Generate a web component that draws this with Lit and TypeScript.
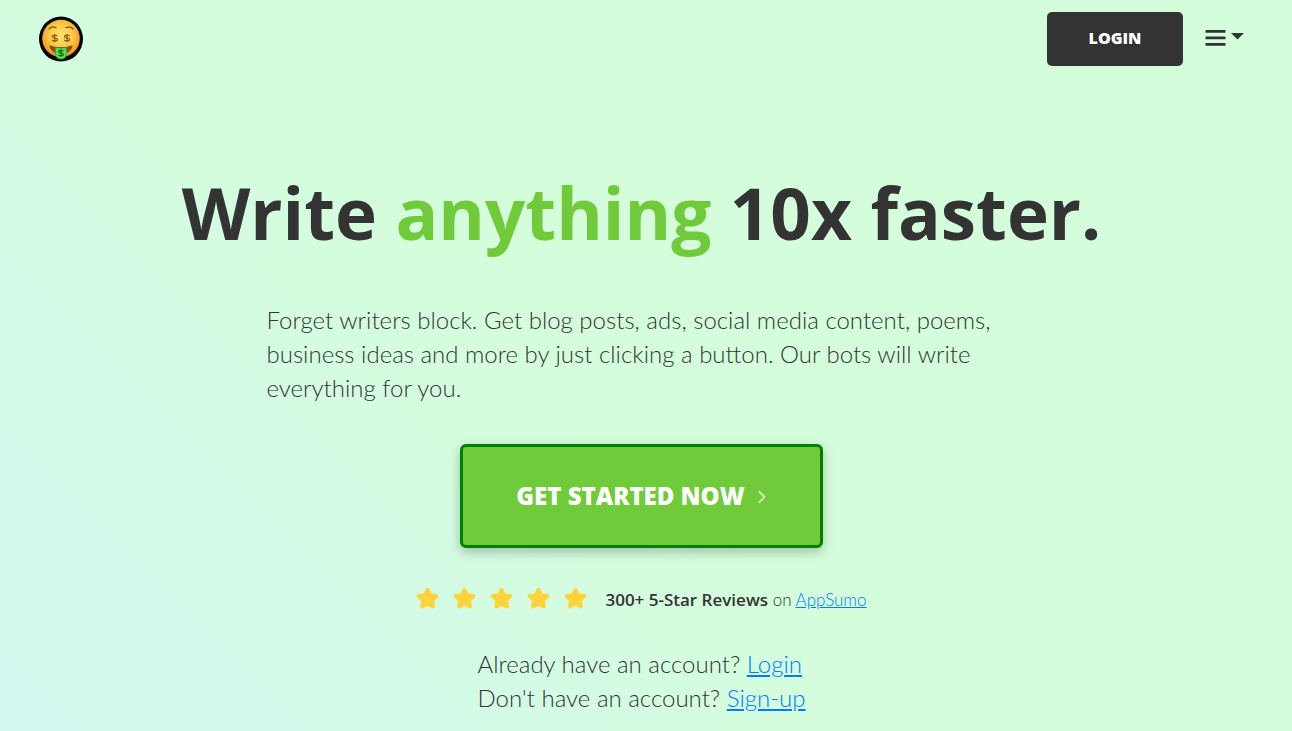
import { LitElement, html, css, svg } from "lit";
import { customElement } from "lit/decorators.js";

@customElement("money-face")
export class MoneyFace extends LitElement {
  static styles = css`
    :host { display: block; }
    svg { display: block; width: 46px; height: 46px; }
  `;

  render() {
    const dollar = svg`
      <path d="M3.200-2.200C2.700-3.300 1.500-3.800 0-3.800c-1.900 0-3.200.7-3.200 1.900C-3.200-.5-1.700-.3 0 0s3.300.6 3.300 2c0 1.200-1.400 1.900-3.300 1.900-1.600 0-2.900-.5-3.400-1.600M0-5V5"></path>
    `;
    return html`
      <svg viewBox="0 0 46 46" role="img" aria-label="Home">
        <defs>
          <radialGradient id="skin" cx="50%" cy="42%" r="58%">
            <stop offset="0" stop-color="#ffe268"></stop>
            <stop offset=".5" stop-color="#fdcd48"></stop>
            <stop offset=".85" stop-color="#f5a52a"></stop>
            <stop offset="1" stop-color="#d8801a"></stop>
          </radialGradient>
        </defs>
        <ellipse cx="23" cy="23" rx="22" ry="22.500" fill="#000"></ellipse>
        <circle cx="23" cy="22.500" r="18.800" fill="url(#skin)"></circle>
        <g fill="none" stroke="#7a4210" stroke-width="1.200" stroke-linecap="round">
          <path d="M11 13c1.500-2 4.600-2.600 7-1.400"></path>
          <path d="M35 13c-1.500-2-4.600-2.600-7-1.400"></path>
        </g>
        <g fill="none" stroke="#7d4c0c" stroke-width="1.300">
          <g transform="translate(16.800 22) scale(.8)">${dollar}</g>
          <g transform="translate(29 22) scale(.8)">${dollar}</g>
        </g>
        <path d="M11.500 29.200c6.500 2.500 16.500 2.500 23 0 .2 4.500-4.500 8.800-11.500 8.800s-11.700-4.300-11.500-8.800z" fill="#8f4a18"></path>
        <path d="M17.600 31.500c3.400.8 7.400.8 10.800 0v6.500c0 3.200-2.200 5-5.400 5s-5.400-1.800-5.400-5z" fill="#4fe04f" stroke="#1fae30" stroke-width=".7"></path>
        <g transform="translate(23 37) scale(.74)" fill="none" stroke="#0a5a18" stroke-width="1.400">${dollar}</g>
      </svg>
    `;
  }
}

@customElement("star-rating")
export class StarRating extends LitElement {
  static styles = css`
    :host { display: flex; gap: 14px; }
    svg {
      display: block;
      width: 23px;
      height: 22px;
      fill: #ffd43b;
      stroke: #ffd43b;
      stroke-width: 4;
      stroke-linejoin: round;
    }
  `;

  render() {
    return [1, 2, 3, 4, 5].map(
      () => html`
        <svg viewBox="0 0 23 22" aria-hidden="true">
          <path d="M11.500 2.800l2.600 5.400 6.200.9-4.500 4.300 1.100 6-5.400-2.800-5.400 2.800 1.100-6L2.700 9.100l6.200-.9z"></path>
        </svg>
      `,
    );
  }
}

@customElement("app-root")
export class AppRoot extends LitElement {
  static styles = css`
    :host {
      display: block;
      box-sizing: border-box;
      min-height: 100vh;
      padding-right: 9px;
      background: linear-gradient(45deg, #d2f8f0 0%, #d3fbe5 26%, #d4fedb 46%);
      color: #333;
      font-family: Lato, "Liberation Sans", sans-serif;
      font-weight: 300;
    }
    header {
      display: flex;
      align-items: center;
      justify-content: space-between;
      padding: 12px 39px 0 38px;
    }
    .actions { display: flex; align-items: center; gap: 22px; }
    button { border: 0; cursor: pointer; color: inherit; }
    .login {
      min-width: 136px;
      padding: 14px 24px 16px;
      border-radius: 5px;
      background: #333;
      color: #fff;
      font: 800 16px/24px "Open Sans", sans-serif;
    }
    .menu {
      display: flex;
      gap: 5px;
      padding: 0;
      background: none;
    }
    .bars { display: block; width: 21px; height: 18px; }
    .caret { display: block; width: 13px; height: 12px; }
    main {
      display: flex;
      flex-direction: column;
      align-items: center;
      padding: 106px 24px 16px;
    }
    h1 {
      margin: 0;
      font: 700 71px/82px "Open Sans", sans-serif;
    }
    .accent { color: #70ca3a; }
    .intro {
      max-width: 750px;
      margin: 49px 0 39px;
      font-size: 24px;
      line-height: 34px;
    }
    .cta {
      display: flex;
      align-items: center;
      gap: 12px;
      padding: 33px 53px;
      border: 3px solid #008000;
      border-radius: 6px;
      background: #6fcb39;
      box-shadow: 0 4px 12px rgba(0, 0, 0, 0.25);
      color: #fff;
      font: 800 24px/32px "Open Sans", sans-serif;
    }
    .chevron { display: block; width: 10px; height: 14px; opacity: 0.6; }
    .reviews {
      display: flex;
      align-items: flex-start;
      gap: 18px;
      margin: 39px 0 34px;
      font-size: 17px;
      line-height: 26px;
    }
    .reviews p, .accounts p { margin: 0; }
    strong { font: 600 17px/26px "Open Sans", sans-serif; }
    a { color: #007bff; text-decoration: underline; }
    .accounts { font-size: 24px; line-height: 34px; }
  `;

  render() {
    return html`
      <header>
        <money-face></money-face>
        <div class="actions">
          <button class="login" type="button">LOGIN</button>
          <button class="menu" type="button" aria-label="Menu">
            <svg class="bars" viewBox="0 0 21 18" fill="#333" aria-hidden="true">
              <rect x="0.500" y="0" width="20" height="2.700" rx=".5"></rect>
              <rect x="0.500" y="6.500" width="20" height="2.700" rx=".5"></rect>
              <rect x="0.500" y="13" width="20" height="2.700" rx=".5"></rect>
            </svg>
            <svg class="caret" viewBox="0 0 13 12" fill="#333" aria-hidden="true">
              <path d="M0 3h13L6.500 9.500z"></path>
            </svg>
          </button>
        </div>
      </header>
      <main>
        <h1>Write <span class="accent">anything</span> 10x faster.</h1>
        <p class="intro">
          Forget writers block. Get blog posts, ads, social media content, poems,
          business ideas and more by just clicking a button. Our bots will write
          everything for you.
        </p>
        <button class="cta" type="button">
          GET STARTED NOW
          <svg class="chevron" viewBox="0 0 10 14" fill="none" stroke="#fff" stroke-width="2" aria-hidden="true">
            <path d="M1.500 2L7.500 8l-6 6"></path>
          </svg>
        </button>
        <div class="reviews">
          <star-rating role="img" aria-label="Five stars"></star-rating>
          <p><strong>300+ 5-Star Reviews</strong> on <a href="#appsumo">AppSumo</a></p>
        </div>
        <div class="accounts">
          <p>Already have an account? <a href="#login">Login</a></p>
          <p>Don't have an account? <a href="#signup">Sign-up</a></p>
        </div>
      </main>
    `;
  }
}
